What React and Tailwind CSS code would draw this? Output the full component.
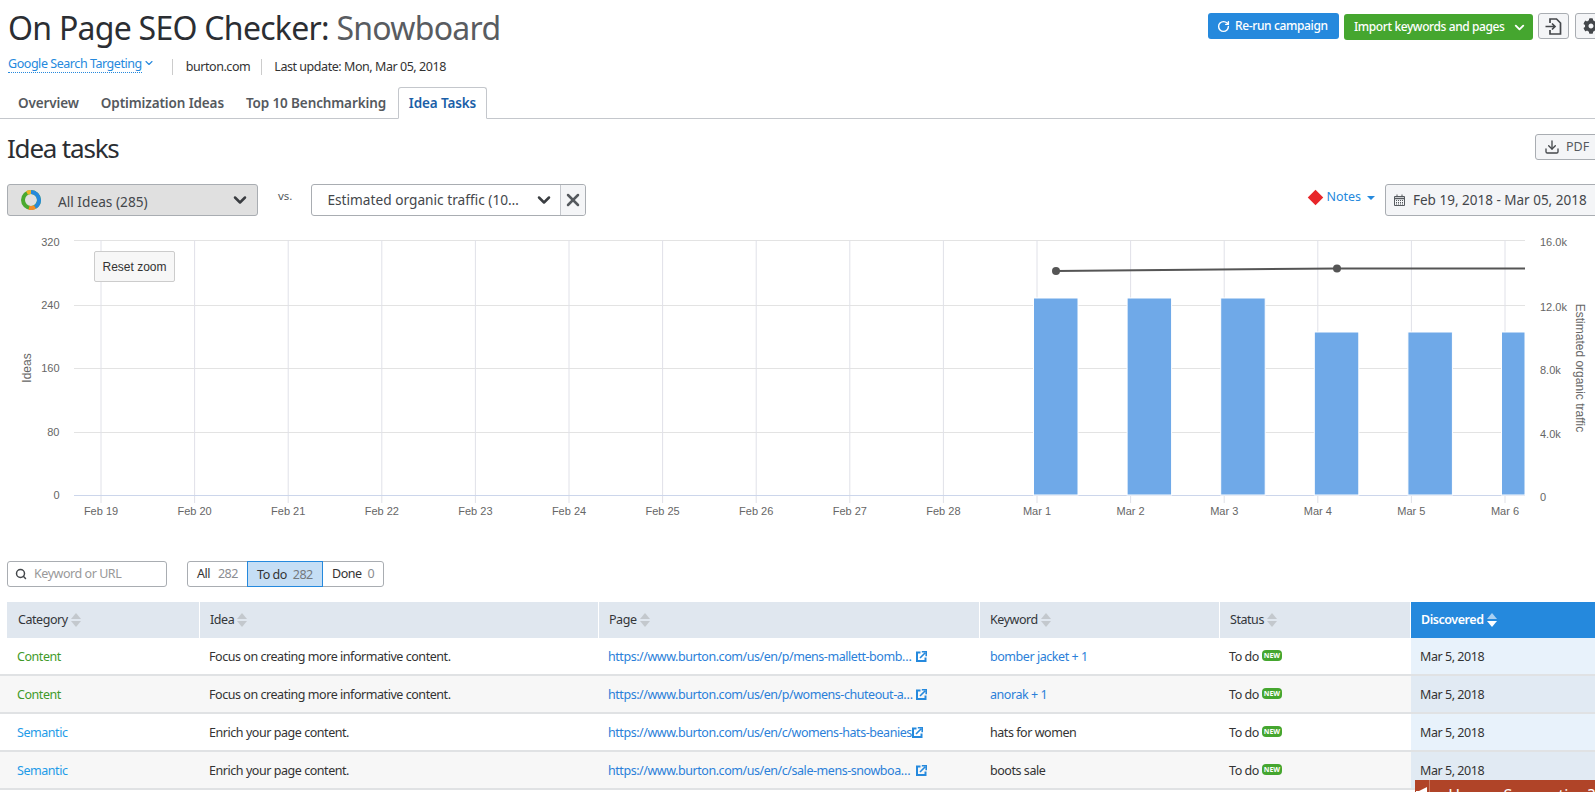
import React from 'react';
import { ChevronDown, RotateCw, Download, X, Search } from 'lucide-react';
import { FaCog } from 'react-icons/fa';

const TICKS = ['Feb 19', 'Feb 20', 'Feb 21', 'Feb 22', 'Feb 23', 'Feb 24', 'Feb 25', 'Feb 26', 'Feb 27', 'Feb 28', 'Mar 1', 'Mar 2', 'Mar 3', 'Mar 4', 'Mar 5', 'Mar 6'];
const GRID_Y = [15, 80, 143, 207, 270];
const LEFT_LABELS = ['320', '240', '160', '80', '0'];
const RIGHT_LABELS = ['16.0k', '12.0k', '8.0k', '4.0k', '0'];
const BARS = [73, 73, 73, 107, 107, 107];

const COLS = 'grid grid-cols-[193px_399px_381px_240px_191px_184px]';

const ROWS = [
  { cat: 'Content', catColor: 'text-[#3f9a2a]', idea: 'Focus on creating more informative content.', page: 'https://www.burton.com/us/en/p/mens-mallett-bomb…', kw: 'bomber jacket + 1', link: true },
  { cat: 'Content', catColor: 'text-[#3f9a2a]', idea: 'Focus on creating more informative content.', page: 'https://www.burton.com/us/en/p/womens-chuteout-a…', kw: 'anorak + 1', link: true },
  { cat: 'Semantic', catColor: 'text-[#1e9be8]', idea: 'Enrich your page content.', page: 'https://www.burton.com/us/en/c/womens-hats-beanies', kw: 'hats for women', flush: true },
  { cat: 'Semantic', catColor: 'text-[#1e9be8]', idea: 'Enrich your page content.', page: 'https://www.burton.com/us/en/c/sale-mens-snowboa…', kw: 'boots sale' },
];

function SortIcon({ active }) {
  return (
    <svg width="10" height="14" viewBox="0 0 10 14" className="ml-[3px] shrink-0">
      <path d="M5 0 L10 6 L0 6 Z" fill={active ? '#a9d0f2' : '#c3c8cd'} />
      <path d="M0 8 L10 8 L5 14 Z" fill={active ? '#ffffff' : '#c3c8cd'} />
    </svg>
  );
}

function ExtIcon() {
  return (
    <svg width="11" height="11" viewBox="0 0 11 11" className="shrink-0 -mt-[1px]">
      <path d="M4.5 1.5 H1 V10 H9.5 V6.5" fill="none" stroke="#2589dd" strokeWidth="2" />
      <path d="M4 7 L9 2 M5.8 0.8 H10.2 V5.2" fill="none" stroke="#2589dd" strokeWidth="1.6" />
    </svg>
  );
}

function Donut() {
  return (
    <svg width="20" height="20" viewBox="0 0 20 20">
      <g fill="none" strokeWidth="4">
        <circle cx="10" cy="10" r="8" stroke="#4aa92f" />
        <path d="M10 2 A8 8 0 0 1 18 10" stroke="#2589dd" />
        <path d="M18 10 A8 8 0 0 1 14 17" stroke="#2589dd" />
        <path d="M14 17 A8 8 0 0 1 8 17.8" stroke="#f28c28" />
        <path d="M6 3 A8 8 0 0 1 10 2" stroke="#f0b429" />
      </g>
    </svg>
  );
}

function Chart() {
  const tickX = i => 101 + i * 93.6;
  return (
    <svg width="1595" height="300" viewBox="0 0 1595 300" className="block" fontFamily="'Liberation Sans', sans-serif" fontSize="11">
      {GRID_Y.slice(0, 4).map(y => <line key={y} x1="74" x2="1525" y1={y + 0.5} y2={y + 0.5} stroke="#e3e3e3" />)}
      {TICKS.map((t, i) => (
        <g key={t}>
          <line x1={tickX(i)} x2={tickX(i)} y1="15" y2="278" stroke="#e0e1e8" />
          <text x={tickX(i)} y="290" textAnchor="middle" fill="#666666">{t}</text>
        </g>
      ))}
      <line x1="74" x2="1525" y1="270.5" y2="270.5" stroke="#ccd6eb" />
      {BARS.map((top, i) => {
        const x = tickX(10 + i) - 3.5;
        return <rect key={i} x={x} y={top} width={i === 5 ? 1525 - x : 44.5} height={270 - top} fill="#6fa9e8" stroke="#ffffff" strokeWidth="1" />;
      })}
      <path d="M1056 46 L1337 43.5 L1525 43.5" fill="none" stroke="#555555" strokeWidth="2" />
      <circle cx="1056" cy="46" r="4" fill="#555555" />
      <circle cx="1337" cy="43.5" r="4" fill="#555555" />
      {LEFT_LABELS.map((l, i) => <text key={l} x="59.5" y={GRID_Y[i] + (i === 0 ? 6 : 4)} textAnchor="end" fill="#666666">{l}</text>)}
      {RIGHT_LABELS.map((l, i) => <text key={l} x="1540" y={GRID_Y[i] + 6} fill="#666666">{l}</text>)}
      <text transform="translate(31 143) rotate(-90)" textAnchor="middle" fill="#666666" fontSize="12">Ideas</text>
      <text transform="translate(1576 143) rotate(90)" textAnchor="middle" fill="#666666" fontSize="12">Estimated organic traffic</text>
    </svg>
  );
}

export default function App() {
  return (
    <div className="relative w-[1595px] h-[792px] overflow-hidden bg-white text-[#333] font-['Noto_Sans',sans-serif]">
      {/* HEADER */}
      <div className="flex justify-between h-[87px] pl-2">
        <div>
          <h1 className="text-[32px] leading-[44px] mt-[6px] tracking-[-0.73px] text-[#2b2e33] whitespace-nowrap">
            On Page SEO Checker: <span className="text-[#595c61]">Snowboard</span>
          </h1>
          <div className="flex items-center text-[12.5px] tracking-[-0.45px] leading-[16px] mt-[9px]">
            <span className="text-[#2589dd] border-b border-dotted border-[#2589dd] -mt-[5px] mr-[1px]">Google Search Targeting</span>
            <ChevronDown size={12} strokeWidth={2.2} className="text-[#2589dd] -mt-[8px]" />
            <span className="ml-[17px] pl-[13px] border-l border-[#ccc] h-[16px]">burton.com</span>
            <span className="ml-[11px] pl-[12px] border-l border-[#ccc] h-[16px]">Last update: Mon, Mar 05, 2018</span>
          </div>
        </div>
        <div className="flex items-start pt-[13px] whitespace-nowrap">
          <button className="flex items-center h-[26px] w-[131px] pl-[9px] rounded-[3px] bg-[#2589dd] text-white text-[12px] tracking-[-0.37px] font-medium">
            <RotateCw size={13} strokeWidth={2.6} className="mr-[5px]" />Re-run campaign
          </button>
          <button className="flex items-center h-[26px] w-[189px] mt-px ml-[5px] pl-[10px] rounded-[3px] bg-[#45a62f] text-white text-[12px] tracking-[-0.4px] font-medium">
            Import keywords and pages<ChevronDown size={15} strokeWidth={3} className="ml-auto mr-[6px]" />
          </button>
          <button className="flex items-center justify-center h-[26px] w-[31px] ml-[5px] rounded-[3px] border border-[#a9adb2] bg-[#f4f5f7]">
            <svg width="17" height="17" viewBox="0 0 17 17" fill="none" stroke="#44474b" strokeWidth="1.7">
              <path d="M5 5 V1 H11.5 L15.5 5 V16 H5 V12" />
              <path d="M0.5 8.5 H10 M7 5.5 L10 8.5 L7 11.5" />
            </svg>
          </button>
          <button className="flex items-center justify-center h-[26px] w-[31px] shrink-0 ml-[6px] -mr-[11px] rounded-[3px] border border-[#a9adb2] bg-[#f4f5f7]">
            <FaCog size={16} color="#44474b" />
          </button>
        </div>
      </div>

      {/* TABS */}
      <div className="flex items-end h-[32px] border-b border-[#c4c7cc] pl-2 text-[13.5px] tracking-[-0.12px] font-semibold text-[#55595e]">
        <span className="px-[10px] h-[31px] leading-[32px] mr-[2px]">Overview</span>
        <span className="px-[10px] h-[31px] leading-[32px] mr-[2px]">Optimization Ideas</span>
        <span className="px-[10px] h-[31px] leading-[32px] mr-[2px]">Top 10 Benchmarking</span>
        <span className="-mb-px h-[32px] w-[89px] text-center leading-[31px] rounded-t-[3px] border border-b-white border-[#c4c7cc] bg-white text-[#1a5fa8]">Idea Tasks</span>
      </div>

      {/* TITLE */}
      <div className="flex justify-between h-[65px] pl-[7px]">
        <h2 className="text-[26px] leading-[34px] mt-[12px] tracking-[-1.2px] text-[#2b2e33]">Idea tasks</h2>
        <button className="flex items-center h-[26px] w-[70px] shrink-0 mt-[15px] -mr-[10px] pl-[8px] rounded-[3px] border border-[#a9adb2] bg-[#f4f5f7] text-[12.5px] text-[#55595e]">
          <Download size={16} strokeWidth={2} className="mr-[6px] text-[#44474b]" />PDF
        </button>
      </div>

      {/* FILTERS */}
      <div className="flex items-start h-[32px] pl-[7px] text-[13.7px]">
        <div className="flex items-center w-[251px] h-[32px] rounded-[3px] border border-[#a9adb2] bg-[#e0e0e0] pl-[13px] pr-[7px]">
          <Donut />
          <span className="ml-[17px] mt-[5px] text-[#44474b]">All Ideas (285)</span>
          <ChevronDown size={20} strokeWidth={3} className="ml-auto text-[#3a3d41]" />
        </div>
        <span className="ml-[20px] mt-[3px] text-[11.5px] text-[#55595e]">vs.</span>
        <div className="flex items-center w-[275px] h-[32px] ml-[19px] rounded-[3px] border border-[#a9adb2] bg-white">
          <span className="ml-[15px] w-[196px] text-[#44474b] whitespace-nowrap">Estimated organic traffic (10…</span>
          <ChevronDown size={20} strokeWidth={3} className="ml-[11px] text-[#3a3d41]" />
          <span className="flex items-center justify-center ml-auto w-[25px] h-full border-l border-[#c4c7cc] bg-[#f4f5f7] rounded-r-[3px]">
            <X size={20} strokeWidth={3} className="text-[#55595e]" />
          </span>
        </div>
        <div className="flex items-center ml-auto -mr-[10px]">
          <span className="w-[11px] h-[11px] -mt-[6px] mr-[-3px] rotate-45 bg-[#e8262a]" />
          <span className="ml-[8px] -mt-[5px] text-[12.5px] text-[#2589dd]">Notes</span>
          <span className="ml-[6px] -mt-[4px] w-0 h-0 border-x-[4px] border-x-transparent border-t-[4px] border-t-[#2589dd]" />
          <div className="flex items-center h-[32px] w-[220px] ml-[10px] pl-[8px] rounded-[3px] border border-[#a9adb2] bg-[#f4f5f7] text-[13.5px] text-[#44474b]">
            <svg width="11" height="12" viewBox="0 0 11 12" fill="none" stroke="#55595e">
              <path d="M0.5 2.5 H10.5 V11.5 H0.5 Z" />
              <path d="M0.5 4.5 H10.5" strokeWidth="1.5" />
              <path d="M3 0.5 V2.5 M8 0.5 V2.5" />
              <path d="M2 6.5 H9 M2 8.5 H9 M2 10 H9" strokeDasharray="1 1" />
            </svg>
            <span className="ml-[8px] whitespace-nowrap">Feb 19, 2018 - Mar 05, 2018</span>
          </div>
        </div>
      </div>

      {/* CHART */}
      <div className="relative mt-[9px]">
        <Chart />
        <button className="absolute left-[94px] top-[26px] w-[81px] h-[31px] rounded-[2px] border border-[#cccccc] bg-[#f7f7f7] text-[12px] text-[#333] font-['Liberation_Sans',sans-serif]">Reset zoom</button>
      </div>

      {/* TOOLBAR */}
      <div className="flex h-[26px] mt-[36px] pl-[7px] text-[12.5px] tracking-[-0.45px]">
        <div className="flex items-center w-[160px] rounded-[3px] border border-[#a9adb2] pl-[7px] text-[#999]">
          <Search size={12} strokeWidth={3} className="mr-[7px] text-[#44474b]" />Keyword or URL
        </div>
        <div className="flex ml-[20px] h-[26px] rounded-[3px] border border-[#a9adb2] text-[#333]">
          <span className="w-[59px] pl-[9px] leading-[23px]">All <span className="ml-[5px] text-[#8a8d91]">282</span></span>
          <span className="w-[76px] -my-px pl-[9px] leading-[25px] border border-[#2589dd] bg-[#c5def5]">To do <span className="ml-[3px] text-[#74797e]">282</span></span>
          <span className="w-[60px] pl-[9px] leading-[23px]">Done <span className="ml-[3px] text-[#8a8d91]">0</span></span>
        </div>
      </div>

      {/* TABLE */}
      <div className="mt-[15px] text-[12.5px] tracking-[-0.45px]">
        <div className={`${COLS} h-[36px] ml-[7px] text-[#33363a]`}>
          {['Category', 'Idea', 'Page', 'Keyword', 'Status'].map(h => (
            <div key={h} className={`flex items-center ${h === 'Category' ? 'pl-[11px]' : 'pl-[10px]'} bg-[#e0e7ef] border-r border-white`}>
              {h}<SortIcon />
            </div>
          ))}
          <div className="flex items-center pl-[10px] bg-[#2589dd] text-white font-semibold">
            Discovered<SortIcon active />
          </div>
        </div>
        {ROWS.map((r, i) => (
          <div key={i} className={`${i % 2 ? 'bg-[#f7f7f7]' : 'bg-white'} border-b-2 border-[#e0e2e4]`}>
            <div className={`${COLS} ml-[7px] h-[36px] items-stretch`}>
              <div className={`flex items-center pl-[10px] pt-[2px] ${r.catColor}`}>{r.cat}</div>
              <div className="flex items-center pl-[9px] pt-[2px]">{r.idea}</div>
              <div className="flex items-center pl-[9px] pt-[2px] text-[#2b7fd9] whitespace-nowrap">
                <span className={r.flush ? '' : 'w-[308px]'}>{r.page}</span><ExtIcon />
              </div>
              <div className={`flex items-center pl-[10px] pt-[2px] ${r.link ? 'text-[#2b7fd9]' : ''}`}>{r.kw}</div>
              <div className="flex items-center pl-[9px] pt-[2px]">
                To do
                <span className="ml-[3px] -mt-[4px] flex items-center justify-center w-[20px] h-[11px] rounded-[4px] bg-[#45a62f] text-white text-[7px] tracking-normal font-bold leading-none">NEW</span>
              </div>
              <div className={`flex items-center pl-[9px] pt-[2px] ${i % 2 ? 'bg-[#e1eaf3]' : 'bg-[#e8f2fb]'}`}>Mar 5, 2018</div>
            </div>
          </div>
        ))}
      </div>

      {/* SUGGESTION WIDGET */}
      <div className="absolute left-[1415px] top-[780px] w-[180px] h-[30px] flex items-start bg-[#b04428] text-white text-[16px]">
        <span className="w-[31px] h-full border-r border-[#c97a63] flex justify-center pt-[6px]">
          <svg width="14" height="14" viewBox="0 0 14 14" fill="#fff"><path d="M1 5 H4 L12 1 V13 L4 9 H1 Z" /></svg>
        </span>
        <span className="ml-[10px] pl-[8px] leading-[31px] whitespace-nowrap">Have a Suggestion?</span>
      </div>
    </div>
  );
}
